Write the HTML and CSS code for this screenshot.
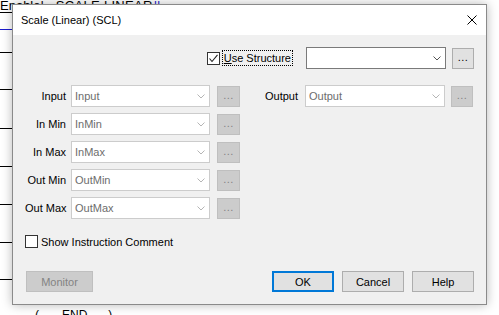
FILE: index.html
```html
<!DOCTYPE html>
<html>
<head>
<meta charset="utf-8">
<link rel="stylesheet" href="styles.css">
</head>
<body>
<div class="desk">
  <div class="ladder">
    <div class="rung r0"><span class="lbl-enable">Enable|</span><span class="lbl-scale">SCALE LINEAR</span><span class="lbl-bars">||</span></div>
    <div class="rung r1 blue"></div>
    <div class="rung r2"></div>
    <div class="rung r3"></div>
    <div class="rung r4"></div>
    <div class="rung r5"></div>
    <div class="rung r6"></div>
    <div class="rung r7"></div>
    <div class="rung r8"></div>
    <div class="end">(<span class="end-word">END</span>)</div>
  </div>

  <div class="dialog">
    <div class="titlebar">
      <span class="title">Scale (Linear) (SCL)</span>
      <svg class="close" width="10" height="10" viewBox="0 0 10 10"><path d="M0.5 0.5 L9.5 9.5 M9.5 0.5 L0.5 9.5" stroke="#000" stroke-width="1" fill="none"/></svg>
    </div>
    <div class="body">
      <div class="toprow">
        <label class="check">
          <span class="box"><svg width="11" height="11" viewBox="0 0 11 11"><path d="M1.5 5.5 L4 8.5 L9.5 1.8" stroke="#222" stroke-width="1.1" fill="none"/></svg></span>
          <span class="focus"><u>U</u>se Structure</span>
        </label>
        <div class="combo enabled top-combo"><span class="val"></span><svg class="chev" width="8" height="5" viewBox="0 0 8 5"><path d="M0.5 0.5 L4 4 L7.5 0.5" stroke="#555" fill="none"/></svg></div>
        <div class="dots enabled">...</div>
      </div>

      <div class="grid">
        <span class="lbl">Input</span>
        <div class="combo"><span class="val">Input</span><svg class="chev" width="8" height="5" viewBox="0 0 8 5"><path d="M0.5 0.5 L4 4 L7.5 0.5" stroke="#b5b5b5" fill="none"/></svg></div>
        <div class="dots">...</div>
        <span class="lbl-r">Output</span>
        <div class="combo wide"><span class="val">Output</span><svg class="chev" width="8" height="5" viewBox="0 0 8 5"><path d="M0.5 0.5 L4 4 L7.5 0.5" stroke="#b5b5b5" fill="none"/></svg></div>
        <div class="dots small">...</div>

        <span class="lbl">In Min</span>
        <div class="combo"><span class="val">InMin</span><svg class="chev" width="8" height="5" viewBox="0 0 8 5"><path d="M0.5 0.5 L4 4 L7.5 0.5" stroke="#b5b5b5" fill="none"/></svg></div>
        <div class="dots">...</div>
        <span class="blank"></span><span class="blank"></span><span class="blank"></span>

        <span class="lbl">In Max</span>
        <div class="combo"><span class="val">InMax</span><svg class="chev" width="8" height="5" viewBox="0 0 8 5"><path d="M0.5 0.5 L4 4 L7.5 0.5" stroke="#b5b5b5" fill="none"/></svg></div>
        <div class="dots">...</div>
        <span class="blank"></span><span class="blank"></span><span class="blank"></span>

        <span class="lbl">Out Min</span>
        <div class="combo"><span class="val">OutMin</span><svg class="chev" width="8" height="5" viewBox="0 0 8 5"><path d="M0.5 0.5 L4 4 L7.5 0.5" stroke="#b5b5b5" fill="none"/></svg></div>
        <div class="dots">...</div>
        <span class="blank"></span><span class="blank"></span><span class="blank"></span>

        <span class="lbl">Out Max</span>
        <div class="combo"><span class="val">OutMax</span><svg class="chev" width="8" height="5" viewBox="0 0 8 5"><path d="M0.5 0.5 L4 4 L7.5 0.5" stroke="#b5b5b5" fill="none"/></svg></div>
        <div class="dots">...</div>
        <span class="blank"></span><span class="blank"></span><span class="blank"></span>
      </div>

      <label class="check comment">
        <span class="box"></span>
        <span>Show Instruction Comment</span>
      </label>

      <div class="buttons">
        <div class="btn monitor">Monitor</div>
        <div class="spacer"></div>
        <div class="btn ok">OK</div>
        <div class="btn">Cancel</div>
        <div class="btn">Help</div>
      </div>
    </div>
  </div>
</div>
</body>
</html>
```

FILE: styles.css
```css
html, body {
  margin: 0;
  padding: 0;
  background: #ffffff;
}
body {
  font-family: "Liberation Sans", Arial, sans-serif;
  font-size: 11px;
  color: #000;
}
.desk {
  position: relative;
  width: 499px;
  height: 315px;
  overflow: hidden;
}

/* background ladder diagram */
.ladder {
  display: flex;
  flex-direction: column;
  width: 200px;
}
.rung {
  width: 40px;
  border-bottom: 1px solid #000;
  box-sizing: content-box;
}
.rung.blue { border-bottom-color: #1a1acc; }
.r0 { width: 180px; border-bottom: none; font-size: 13px; line-height: 12px; white-space: nowrap; }
.r0::after { content: ""; display: block; width: 40px; border-bottom: 1px solid #000; }
.lbl-enable { display: inline-block; }
.lbl-scale { display: inline-block; margin-left: 12px; letter-spacing: 0.3px; }
.lbl-bars { color: #1a1acc; margin-left: 1px; }
.r1 { height: 16px; }
.r2 { height: 22px; }
.r3 { height: 36px; }
.r4 { height: 38px; }
.r5 { height: 37px; }
.r6 { height: 37px; }
.r7 { height: 37px; }
.r8 { height: 36px; }
.end {
  margin-top: 29px;
  margin-left: 35px;
  font-size: 12px;
  line-height: 12px;
  white-space: nowrap;
}
.end-word { margin: 0 21px 0 23px; }

/* dialog window */
.dialog {
  position: absolute;
  left: 12px;
  top: 4px;
  width: 475px;
  height: 301px;
  box-sizing: border-box;
  border: 1px solid #8a8a8a;
  background: #f0f0f0;
  box-shadow: 0 0 10px rgba(0,0,0,0.28);
  display: flex;
  flex-direction: column;
}
.titlebar {
  height: 30px;
  background: #fff;
  display: flex;
  align-items: center;
  justify-content: space-between;
  padding: 0 9px 0 8px;
  flex: none;
}
.title { font-size: 11px; padding-bottom: 1px; }
.close { display: block; margin-top: -1px; }

.body {
  flex: 1;
  padding: 12px 12px 0 12px;
  display: flex;
  flex-direction: column;
}

.toprow {
  display: flex;
  justify-content: flex-end;
  align-items: center;
  height: 22px;
}
.check {
  display: flex;
  align-items: center;
}
.box {
  width: 13px;
  height: 13px;
  box-sizing: border-box;
  border: 1px solid #333;
  background: #fff;
  display: flex;
  align-items: center;
  justify-content: center;
}
.box svg { display: block; }
.toprow .check { margin-right: 13px; }
.focus {
  margin-left: 2px;
  border: 1px dotted #000;
  padding: 1px;
  line-height: 12px;
}
.focus u { text-decoration: underline; }

.combo {
  height: 22px;
  box-sizing: border-box;
  border: 1px solid #cccccc;
  background: #fff;
  display: flex;
  align-items: center;
  justify-content: space-between;
  padding: 0 4px 0 3px;
  width: 139px;
  color: #6d6d6d;
}
.combo.wide, .combo.top-combo { width: 140px; }
.combo.enabled { border-color: #7a7a7a; }
.chev { display: block; flex: none; }

.dots {
  width: 23px;
  height: 21px;
  box-sizing: border-box;
  border: 1px solid #bfbfbf;
  background: #cccccc;
  color: #838383;
  text-align: center;
  line-height: 17px;
  font-size: 11px;
  letter-spacing: 0.5px;
}
.dots.small { width: 22px; }
.dots.enabled {
  width: 22px;
  margin-left: 6px;
  border-color: #adadad;
  background: #e1e1e1;
  color: #000;
}

.grid {
  margin-top: 16px;
  display: grid;
  grid-template-columns: 46px 146px 48px 40px 146px 22px;
  grid-auto-rows: 22px;
  row-gap: 6px;
  align-items: center;
}
.lbl {
  text-align: right;
  padding-right: 5px;
  white-space: nowrap;
}
.lbl-r { white-space: nowrap; }

.comment {
  margin-top: 16px;
  height: 13px;
}
.comment .box { margin-right: 3px; }

.buttons {
  margin-top: 23px;
  display: flex;
  gap: 8px;
  align-items: center;
}
.spacer { flex: 1; }
.btn {
  width: 62px;
  height: 21px;
  box-sizing: border-box;
  border: 1px solid #adadad;
  background: #e1e1e1;
  display: flex;
  align-items: center;
  justify-content: center;
}
.btn.monitor {
  width: 67px;
  margin-left: 1px;
  background: #cccccc;
  border-color: #bfbfbf;
  color: #838383;
}
.btn.ok { border: 2px solid #0078d7; }
```
